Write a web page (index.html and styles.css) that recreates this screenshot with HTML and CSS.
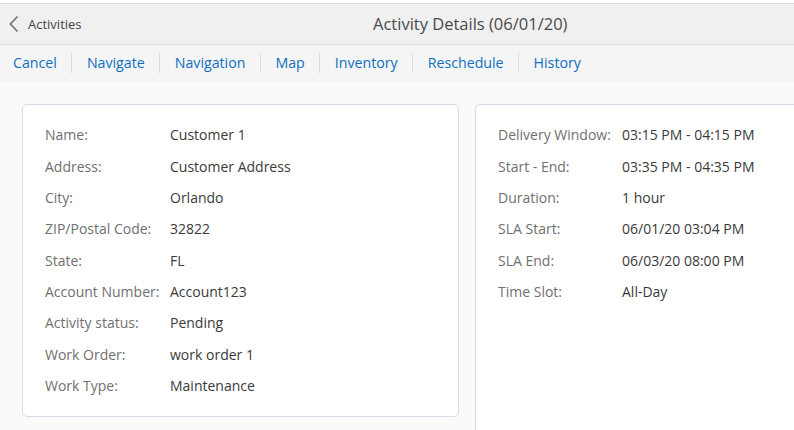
FILE: index.html
```html
<!DOCTYPE html>
<html>
<head>
<meta charset="utf-8">
<link rel="stylesheet" href="styles.css">
</head>
<body>
<div class="page">
  <div class="header">
    <div class="back">
      <svg class="chev" width="12" height="18" viewBox="0 0 12 18"><path d="M9.5 1.5 L2.5 9 L9.5 16.5" fill="none" stroke="#777" stroke-width="1.8"/></svg>
      <span>Activities</span>
    </div>
    <div class="title">Activity Details (06/01/20)</div>
  </div>
  <div class="toolbar">
    <a class="tb">Cancel</a>
    <a class="tb">Navigate</a>
    <a class="tb">Navigation</a>
    <a class="tb">Map</a>
    <a class="tb">Inventory</a>
    <a class="tb">Reschedule</a>
    <a class="tb">History</a>
  </div>
  <div class="content">
    <div class="card left">
      <div class="row"><span class="lbl">Name:</span><span class="val">Customer 1</span></div>
      <div class="row"><span class="lbl">Address:</span><span class="val">Customer Address</span></div>
      <div class="row"><span class="lbl">City:</span><span class="val">Orlando</span></div>
      <div class="row"><span class="lbl">ZIP/Postal Code:</span><span class="val">32822</span></div>
      <div class="row"><span class="lbl">State:</span><span class="val">FL</span></div>
      <div class="row"><span class="lbl">Account Number:</span><span class="val">Account123</span></div>
      <div class="row"><span class="lbl">Activity status:</span><span class="val">Pending</span></div>
      <div class="row"><span class="lbl">Work Order:</span><span class="val">work order 1</span></div>
      <div class="row"><span class="lbl">Work Type:</span><span class="val">Maintenance</span></div>
    </div>
    <div class="card right">
      <div class="row"><span class="lbl">Delivery Window:</span><span class="val">03:15 PM - 04:15 PM</span></div>
      <div class="row"><span class="lbl">Start - End:</span><span class="val">03:35 PM - 04:35 PM</span></div>
      <div class="row"><span class="lbl">Duration:</span><span class="val">1 hour</span></div>
      <div class="row"><span class="lbl">SLA Start:</span><span class="val">06/01/20 03:04 PM</span></div>
      <div class="row"><span class="lbl">SLA End:</span><span class="val">06/03/20 08:00 PM</span></div>
      <div class="row"><span class="lbl">Time Slot:</span><span class="val">All-Day</span></div>
    </div>
  </div>
</div>
</body>
</html>
```
FILE: styles.css
```css
html, body {
  margin: 0;
  padding: 0;
  background: #fafafa;
  font-family: "Open Sans", "Noto Sans", sans-serif;
  overflow: hidden;
}
.page {
  width: 794px;
  height: 430px;
  padding-top: 3px;
  background: #fff;
}
.header {
  display: flex;
  align-items: center;
  height: 40px;
  background: #f0f0f0;
  border-top: 1px solid #dcdcdc;
  border-bottom: 1px solid #dcdcdc;
  position: relative;
}
.back {
  display: flex;
  align-items: center;
  padding-left: 8px;
  font-size: 13px;
  color: #444;
}
.chev { margin-right: 8px; }
.title {
  position: absolute;
  left: 373px;
  top: 0;
  line-height: 40px;
  font-size: 16.5px;
  color: #4a4a4a;
}
.toolbar {
  display: flex;
  align-items: center;
  height: 36px;
  background: #f5f5f5;
  padding-left: 0;
}
.tb {
  font-size: 14.2px;
  color: #0f6fbf;
  padding: 0 14.5px;
  border-left: 1px solid #d5dde5;
  line-height: 20px;
}
.tb:first-child { border-left: none; padding-left: 13px; }
.content {
  display: flex;
  gap: 16px;
  background: #fafafa;
  padding: 23px 0 0 22px;
  height: 326px;
  overflow: hidden;
}
.card {
  background: #fff;
  border: 1px solid #d5dee8;
  border-radius: 5px;
  padding: 14px 0 9px 22px;
  box-sizing: border-box;
}
.left { width: 437px; height: 313px; }
.right { flex: 1; height: 360px; border-right: none; border-radius: 5px 0 0 5px; }
.row {
  display: flex;
  height: 31.35px;
  align-items: center;
  font-size: 14px;
}
.lbl { color: #707070; width: 125px; flex: none; }
.right .lbl { width: 124px; }
.val { color: #3a3a3a; }
```
